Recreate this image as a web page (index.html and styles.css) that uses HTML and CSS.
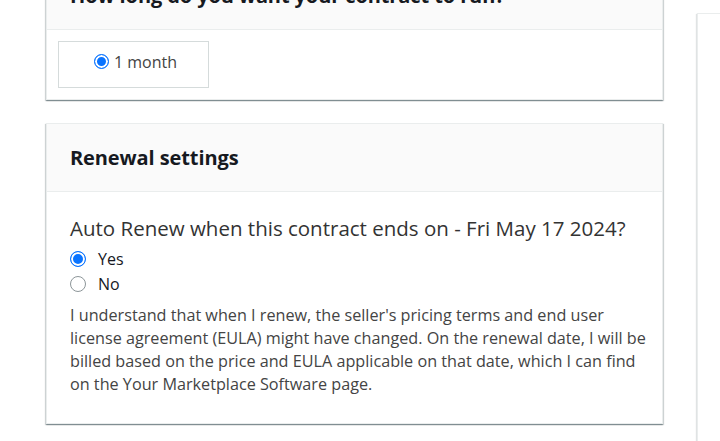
FILE: index.html
```html
<!DOCTYPE html>
<html lang="en">
<head>
<meta charset="utf-8">
<title>Contract settings</title>
<link rel="stylesheet" href="styles.css">
</head>
<body>
<div class="page">
  <main class="main">
    <section class="card">
      <header class="card-head">
        <h2>How long do you want your contract to run?</h2>
      </header>
      <div class="card-body tiles">
        <label class="tile">
          <span class="radio radio-sm checked"></span>
          <span class="tile-text">1 month</span>
        </label>
      </div>
    </section>

    <section class="card">
      <header class="card-head">
        <h2>Renewal settings</h2>
      </header>
      <div class="card-body renew">
        <h3 class="question">Auto Renew when this contract ends on - Fri May 17 2024?</h3>
        <div class="options">
          <label class="option"><span class="radio checked"></span><span>Yes</span></label>
          <label class="option"><span class="radio"></span><span>No</span></label>
        </div>
        <p class="note">I understand that when I renew, the seller's pricing terms and end user license agreement (EULA) might have changed. On the renewal date, I will be billed based on the price and EULA applicable on that date, which I can find on the Your Marketplace Software page.</p>
      </div>
    </section>
  </main>
  <aside class="side"></aside>
</div>
</body>
</html>
```

FILE: styles.css
```css
* { box-sizing: border-box; }
html, body { margin: 0; padding: 0; background: #fff; overflow: hidden; }
body {
  font-family: "Open Sans", "Noto Sans", sans-serif;
  color: #16191f;
}
.page {
  display: flex;
  align-items: flex-start;
  gap: 34px;
  padding-left: 46px;
  margin-top: -39px;
}
.main {
  width: 617px;
  flex: none;
  display: flex;
  flex-direction: column;
  gap: 23px;
}
.card {
  background: #fff;
  border: 1px solid #eaeded;
  box-shadow: 0 1px 1px 0 rgba(0, 28, 36, 0.3), 1px 1px 1px 0 rgba(0, 28, 36, 0.15), -1px 1px 1px 0 rgba(0, 28, 36, 0.15);
}
.card-head {
  background: #fafafa;
  border-bottom: 1px solid #eaeded;
  height: 68px;
  display: flex;
  align-items: center;
  padding: 0 23px;
}
.card-head h2 {
  margin: 0;
  font-size: 20px;
  font-weight: 700;
  color: #16191f;
  letter-spacing: -0.1px;
  white-space: nowrap;
}
.tiles {
  padding: 11px 11px 11px;
}
.tile {
  width: 151px;
  height: 47px;
  border: 1px solid #d5dbdb;
  display: flex;
  align-items: center;
  justify-content: center;
  gap: 5px;
  padding-bottom: 6px;
  padding-left: 4px;
}
.tile-text {
  font-size: 16px;
  color: #444;
}
.radio {
  width: 16px;
  height: 16px;
  border-radius: 50%;
  border: 1px solid #8d9699;
  background: #fff;
  flex: none;
  display: inline-block;
}
.radio.checked {
  border: 1.5px solid #0a74ff;
  background: #0a74ff;
  box-shadow: inset 0 0 0 2px #fff;
}
.radio-sm { width: 15px; height: 15px; }
.renew {
  padding: 19px 23px 27px;
}
.question {
  margin: 0;
  font-size: 20.5px;
  font-weight: 400;
  color: #333;
  line-height: 34px;
  white-space: nowrap;
}
.options {
  display: flex;
  flex-direction: column;
  margin-top: 1px;
}
.option {
  display: flex;
  align-items: center;
  gap: 12px;
  height: 25px;
  font-size: 16px;
  color: #16191f;
}
.note {
  margin: 8px -16px 0 0;
  font-size: 16.2px;
  line-height: 23px;
  color: #444;
}
.side {
  flex: 1;
  margin-top: 52px;
  height: 460px;
  border: 1px solid #eaeded;
  border-right: none;
  box-shadow: -1px 1px 1px 0 rgba(0, 28, 36, 0.12);
}
```
